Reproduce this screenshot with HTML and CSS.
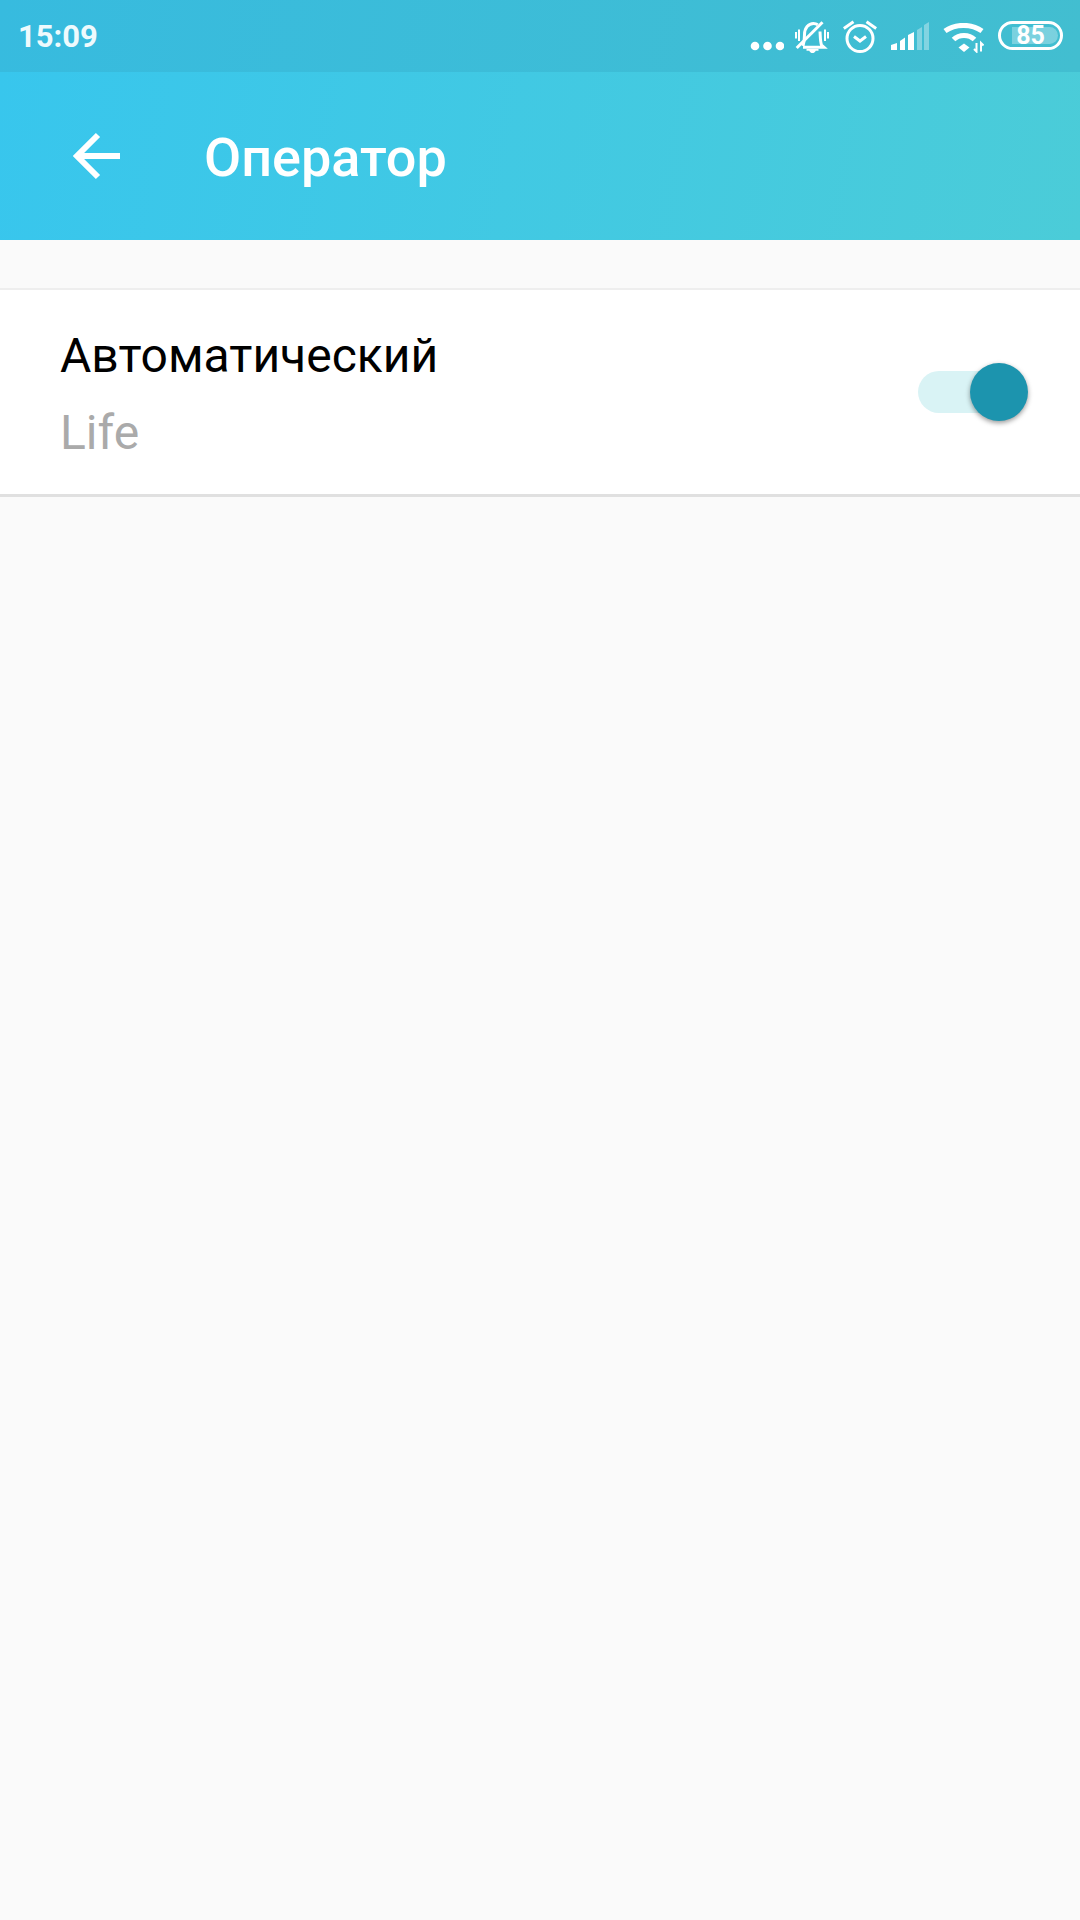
FILE: index.html
```html
<!DOCTYPE html>
<html lang="ru">
  <head>
    <meta charset="UTF-8" />
    <meta name="viewport" content="width=device-width, initial-scale=1.0" />
    <title>Оператор</title>
    <link rel="stylesheet" href="styles.css">
  </head>
  <body>
    <div class="status-bar">
      <span class="time">15:09</span>
      <div class="status-icons">
        <svg class="icon-dots" width="34" height="10" viewBox="0 0 34 10">
          <circle cx="5" cy="5" r="4.3" />
          <circle cx="17.500" cy="5" r="4.3" />
          <circle cx="30" cy="5" r="4.3" />
        </svg>
        <svg class="icon-bell" width="34" height="34" viewBox="0 0 34 34">
          <path class="line" d="M8 26c1-3 1.500-6 1.500-11.500C9.500 8 13.500 3.500 18.500 3.500c1.500 0 3 .4 4.200 1.300M25 11.500c.3 4 .2 10 1.500 13.500l2.500 2.300H8" />
          <path class="line" d="M1.700 28 27.500 2.200" />
          <path class="line thin" d="M1 12v6.500M4 9.500v11.500M30 9.500v11.500M33 12v6.500" />
          <path class="fill" d="M11.500 29h12v1.700h-2.700c-.8 1.500-2 2.300-3.300 2.300s-2.500-.8-3.300-2.300h-2.700z" />
        </svg>
        <svg class="icon-alarm" width="34" height="34" viewBox="0 0 34 34">
          <circle class="line" cx="17" cy="18.500" r="13" />
          <path class="line" d="M11 16.500l6 4.500 6-4.500M.8 8.500 10.500 1.700M33.200 8.500 23.500 1.700" />
        </svg>
        <svg class="icon-signal" width="38" height="28" viewBox="0 0 38 28">
          <polygon class="fill" points="0,23 6,21 6,28 0,28" />
          <polygon class="fill" points="9,19 14,15.500 14,28 9,28" />
          <polygon class="fill" points="17,13 23,10 23,28 17,28" />
          <polygon class="fill dim" points="26,8 31,5 31,28 26,28" />
          <polygon class="fill dim" points="33,3 38,0 38,28 33,28" />
        </svg>
        <svg class="icon-wifi" width="41" height="30" viewBox="0 0 41 30">
          <path class="line wide" d="M2 8C12 .5 29 .5 39 8" />
          <path class="line wide" d="M10.500 16.500C16 11 26 11 31.500 16.500" />
          <path class="fill" d="M15.500 24.500l5.500-4 5.500 4-5.500 4.500z" />
          <path class="line thin" d="M33.500 20v8.500l-2.500-2.500M38 28.500v-8.500l2.500 2.500" />
        </svg>
        <div class="battery">
          <div class="battery-level"></div>
          <span class="battery-text">85</span>
        </div>
      </div>
    </div>
    <div class="toolbar">
      <svg class="back-arrow" width="48" height="48" viewBox="0 0 48 48">
        <path d="M48 24H6M26 3 5 24l21 21" />
      </svg>
      <h1>Оператор</h1>
    </div>
    <div class="content">
      <div class="row">
        <div class="row-text">
          <div class="row-title">Автоматический</div>
          <div class="row-value">Life</div>
        </div>
        <div class="switch">
          <div class="switch-thumb"></div>
        </div>
      </div>
    </div>
  </body>
</html>
```
FILE: styles.css
```css
* {
  margin: 0;
  padding: 0;
  box-sizing: border-box;
  font-family: Roboto, "Noto Sans", sans-serif;
}

body {
  background-color: #fafafa;
  width: 1080px;
  height: 1920px;
  overflow: hidden;
}

.status-bar {
  height: 72px;
  padding: 0 17px 0 18px;
  display: flex;
  align-items: center;
  justify-content: space-between;
  background: linear-gradient(100deg, #37bbdf, #42bed0);
}

.time {
  color: #eefafd;
  font-size: 31px;
  font-weight: 700;
}

.status-icons {
  display: flex;
  align-items: center;
  gap: 14px;
  height: 34px;
  margin-top: 2px;
}

.status-icons svg {
  flex: none;
}

.line {
  fill: none;
  stroke: #fff;
  stroke-width: 3;
}

.line.thin {
  stroke-width: 2;
}

.line.wide {
  stroke-width: 5;
}

.fill,
.icon-dots {
  fill: #fff;
}

.fill.dim {
  fill: rgba(255, 255, 255, 0.35);
}

.icon-dots {
  margin: 17px -3px 0 0;
}

.icon-signal {
  margin-top: -3px;
}

.icon-wifi {
  margin-top: 2px;
}

.battery {
  position: relative;
  width: 65px;
  height: 29px;
  margin-top: -3px;
  border: 3px solid #fff;
  border-radius: 15px;
  display: flex;
  align-items: center;
  justify-content: center;
}

.battery-level {
  position: absolute;
  left: 11px;
  top: 3px;
  bottom: 3px;
  right: 2px;
  border-radius: 0 9px 9px 0;
  background-color: rgba(255, 255, 255, 0.3);
}

.battery-text {
  position: relative;
  color: #fff;
  font-size: 25px;
  font-weight: 700;
}

.toolbar {
  height: 168px;
  padding-left: 72px;
  display: flex;
  align-items: center;
  background: linear-gradient(100deg, #38c6ed, #4bccd8);
}

.back-arrow {
  margin-right: 84px;
}

.back-arrow path {
  fill: none;
  stroke: #fff;
  stroke-width: 6;
}

.toolbar h1 {
  margin-top: 2px;
  color: #fff;
  font-size: 54px;
  font-weight: 500;
}

.content {
  padding-top: 48px;
}

.row {
  height: 209px;
  padding: 0 50px 0 60px;
  display: flex;
  align-items: center;
  justify-content: space-between;
  background-color: #fff;
  border-top: 2px solid #eee;
  border-bottom: 3px solid #e0e0e0;
}

.row-text {
  margin-top: 4px;
}

.row-title {
  color: #000;
  font-size: 48px;
  line-height: 64px;
}

.row-value {
  color: #aaa;
  font-size: 48px;
  line-height: 64px;
  margin-top: 13px;
}

.switch {
  position: relative;
  width: 100px;
  height: 42px;
  margin-right: 12px;
  border-radius: 21px;
  background-color: #d9f3f5;
}

.switch-thumb {
  position: absolute;
  right: -10px;
  top: -8px;
  width: 58px;
  height: 58px;
  border-radius: 50%;
  background-color: #1c94ae;
  box-shadow: 0 2px 5px rgba(0, 0, 0, 0.4);
}
```
